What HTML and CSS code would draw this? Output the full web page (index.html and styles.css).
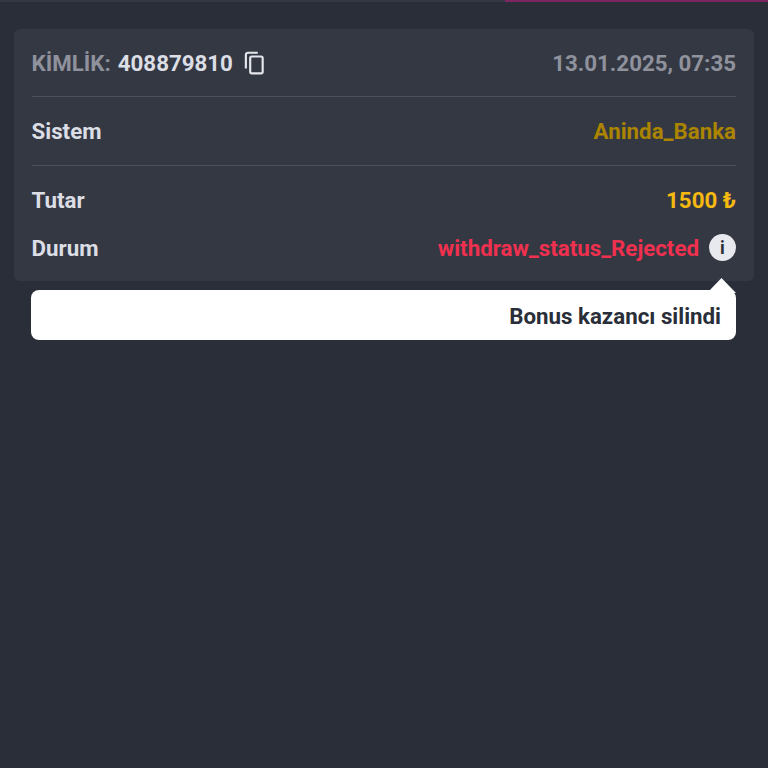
FILE: index.html
```html
<!DOCTYPE html>
<html lang="en">
<head>
    <meta charset="UTF-8">
    <meta name="viewport" content="width=device-width, initial-scale=1.0">
    <title>Withdraw detail</title>
    <link rel="stylesheet" href="styles.css">
</head>
<body>

<div class="topbar">
    <div class="progress"></div>
</div>

<div class="content">
    <div class="card">
        <div class="row row-line row-head">
            <div class="id-group">
                <span class="muted">KİMLİK:</span>
                <span class="id-value">408879810</span>
                <svg class="copy-icon" viewBox="0 0 24 24" width="26" height="26" fill="none" stroke="#e4e6ec" stroke-width="2">
                    <path d="M15.5 2.5H6.5a2 2 0 0 0-2 2V17"/>
                    <rect x="8.5" y="6" width="11.5" height="15.5" rx="1.5"/>
                </svg>
            </div>
            <span class="date">13.01.2025, 07:35</span>
        </div>
        <div class="row row-line row-system">
            <span class="label">Sistem</span>
            <span class="system">Aninda_Banka</span>
        </div>
        <div class="row row-amount">
            <span class="label">Tutar</span>
            <span class="amount">1500 ₺</span>
        </div>
        <div class="row row-status">
            <span class="label">Durum</span>
            <div class="status-group">
                <span class="status">withdraw_status_Rejected</span>
                <span class="info-btn">i</span>
            </div>
        </div>
    </div>

    <div class="tooltip">
        <span class="tooltip-arrow"></span>
        Bonus kazancı silindi
    </div>
</div>

</body>
</html>
```

FILE: styles.css
```css
html, body {
    height: 100%;
}
body {
    font-family: 'Roboto', sans-serif;
    font-weight: 700;
    font-size: 22.3px;
    margin: 0;
    background: #2a2e39;
    color: #dcdee5;
    overflow: hidden;
}
.topbar {
    height: 2px;
    background: #343843;
    display: flex;
    justify-content: flex-end;
}
.progress {
    width: 263px;
    background: #7c2560;
}
.content {
    padding: 27px 14px 0;
}
.card {
    background: #343843;
    border-radius: 6px;
    padding: 0 18px 0 17.5px;
    height: 252px;
    box-sizing: border-box;
}
.row {
    display: flex;
    justify-content: space-between;
    align-items: center;
    box-sizing: border-box;
}
.row-line {
    border-bottom: 1px solid #4d515c;
}
.row-head {
    height: 68px;
    padding-top: 1px;
}
.row-system {
    height: 69px;
}
.row-amount {
    height: 68px;
    padding-bottom: 1px;
}
.row-status {
    height: 27px;
}
.id-group {
    display: flex;
    align-items: center;
}
.muted {
    color: #8f929c;
}
.id-value {
    margin-left: 7px;
}
.copy-icon {
    margin-left: 8px;
}
.date {
    color: #8f929c;
}
.system {
    color: #ab8400;
}
.amount {
    color: #f6b911;
}
.status-group {
    display: flex;
    align-items: center;
    gap: 10px;
}
.status {
    color: #f0304f;
}
.info-btn {
    width: 27px;
    height: 27px;
    border-radius: 50%;
    background: #e8e9ee;
    color: #2a2e39;
    font-size: 18px;
    display: flex;
    align-items: center;
    justify-content: center;
}
.tooltip {
    position: relative;
    margin: 9px 18px 0 17px;
    height: 50px;
    box-sizing: border-box;
    padding: 1px 15px 0 0;
    background: #fff;
    border-radius: 8px;
    color: #2a2e39;
    display: flex;
    align-items: center;
    justify-content: flex-end;
}
.tooltip-arrow {
    position: absolute;
    top: -12px;
    right: 0;
    width: 29px;
    height: 15px;
    background: #fff;
    clip-path: polygon(50% 0, 100% 100%, 0 100%);
}
```
